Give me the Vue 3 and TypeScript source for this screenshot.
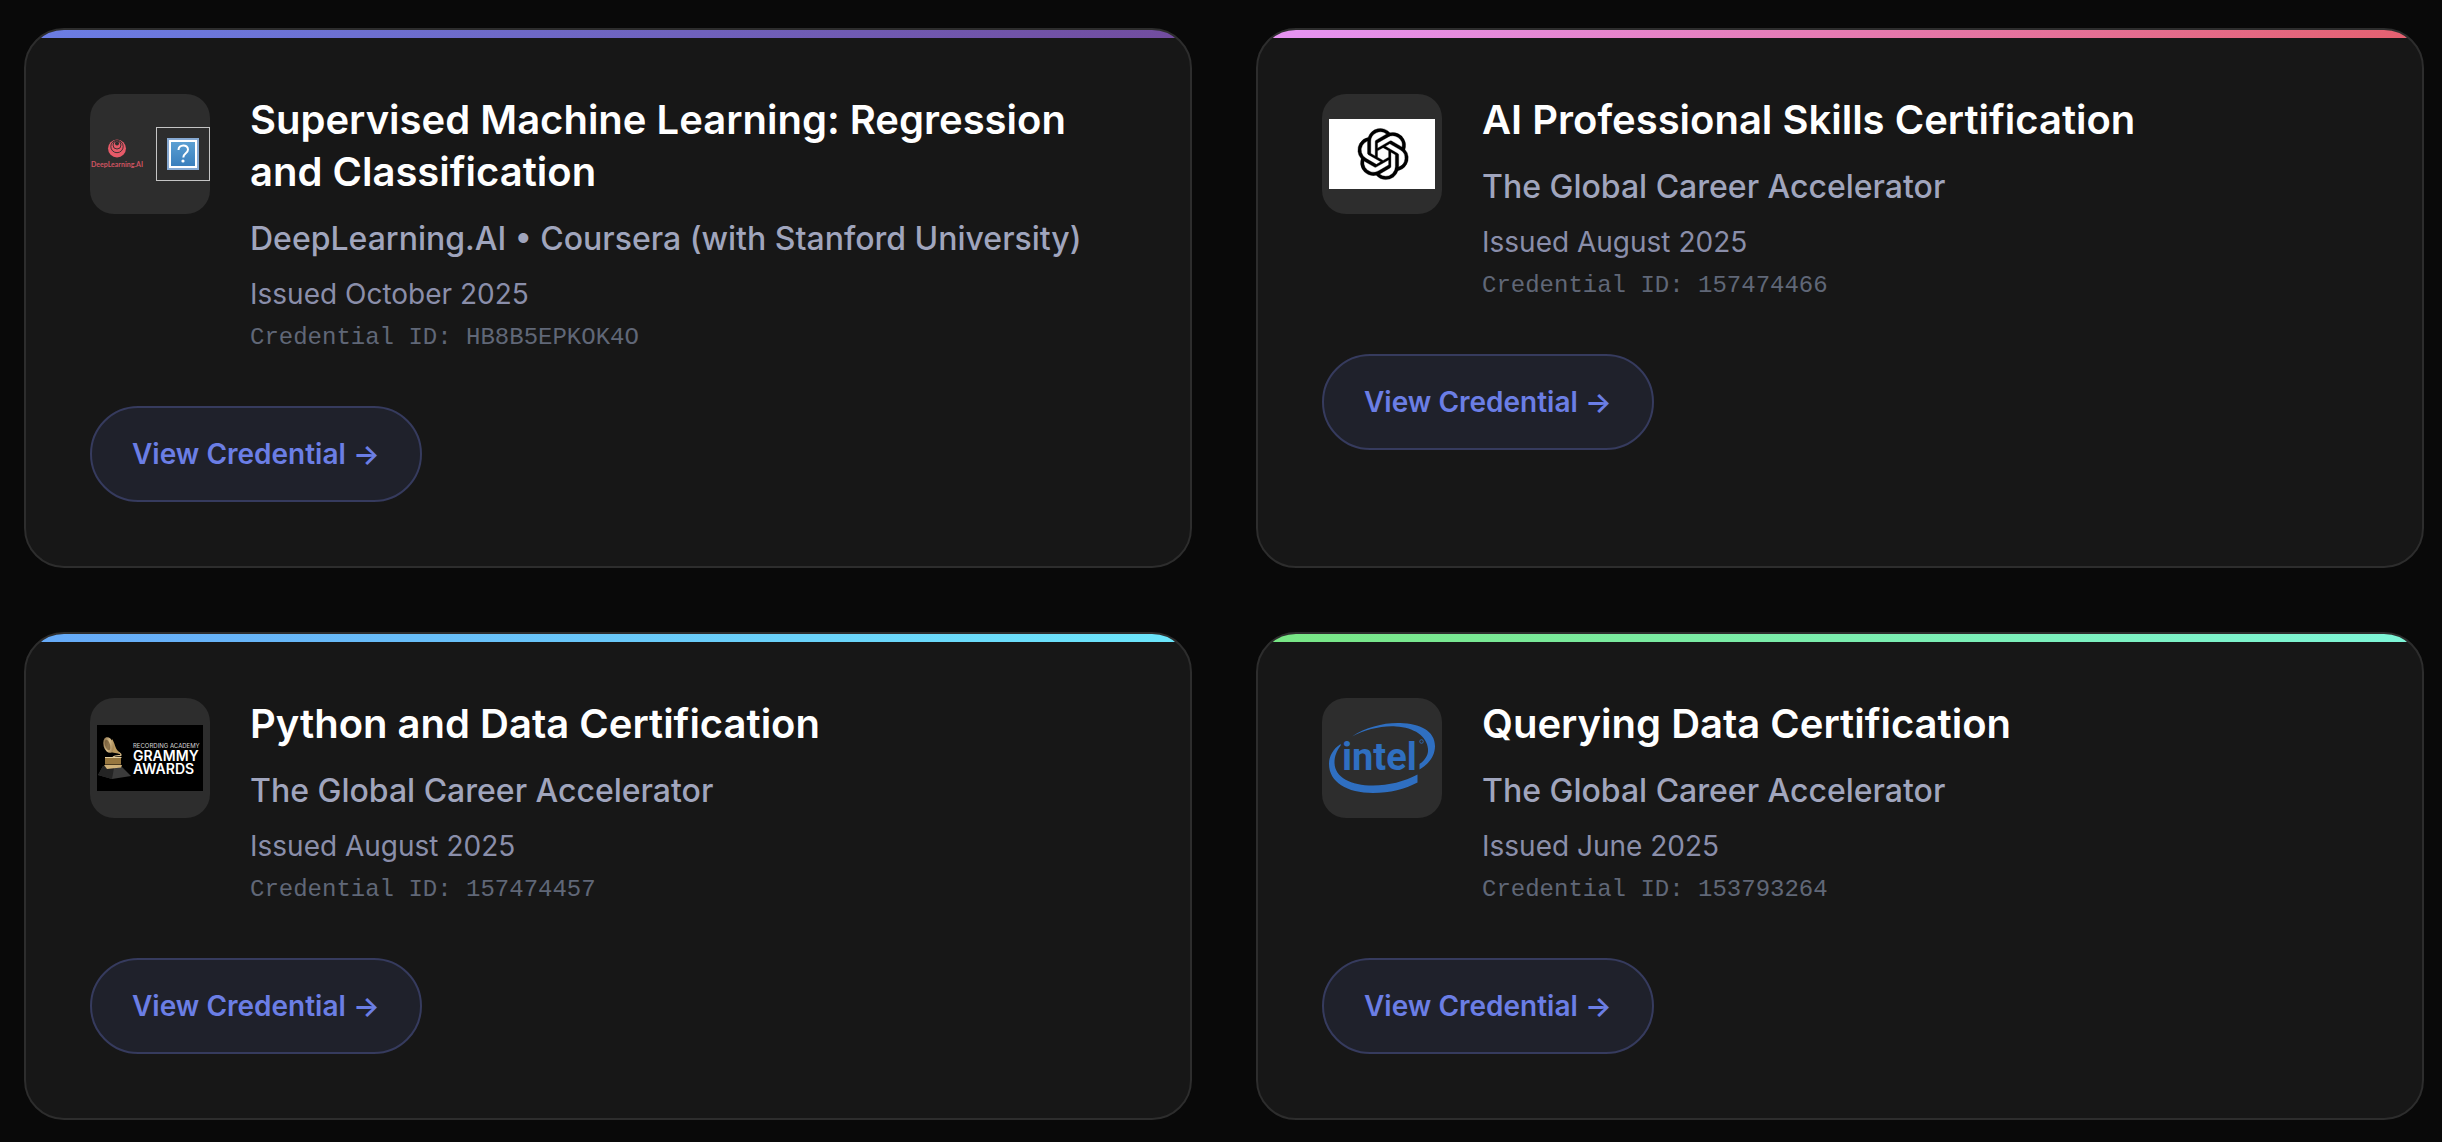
<script setup lang="ts">
interface Credential {
  title: string
  issuer: string
  issued: string
  id: string
  logo: 'deeplearning' | 'openai' | 'grammy' | 'intel'
  accent: 'violet' | 'pink' | 'sky' | 'mint'
}

const credentials: Credential[] = [
  {
    title: 'Supervised Machine Learning: Regression and Classification',
    issuer: 'DeepLearning.AI • Coursera (with Stanford University)',
    issued: 'October 2025',
    id: 'HB8B5EPKOK4O',
    logo: 'deeplearning',
    accent: 'violet',
  },
  {
    title: 'AI Professional Skills Certification',
    issuer: 'The Global Career Accelerator',
    issued: 'August 2025',
    id: '157474466',
    logo: 'openai',
    accent: 'pink',
  },
  {
    title: 'Python and Data Certification',
    issuer: 'The Global Career Accelerator',
    issued: 'August 2025',
    id: '157474457',
    logo: 'grammy',
    accent: 'sky',
  },
  {
    title: 'Querying Data Certification',
    issuer: 'The Global Career Accelerator',
    issued: 'June 2025',
    id: '153793264',
    logo: 'intel',
    accent: 'mint',
  },
]
</script>

<template>
  <main class="credentials">
    <article v-for="item in credentials" :key="item.id" class="card" :class="item.accent">
      <header class="head">
        <div class="tile">
          <svg v-if="item.logo === 'deeplearning'" viewBox="0 0 120 120" aria-hidden="true">
            <defs>
              <linearGradient id="missing-blue" x1="0" y1="0" x2="0" y2="1">
                <stop offset="0" stop-color="#5a9fd2" />
                <stop offset="1" stop-color="#3a7fbd" />
              </linearGradient>
            </defs>
            <circle cx="27" cy="54.500" r="9" fill="#e65a68" />
            <g fill="none" stroke="#2d2d2d" stroke-width=".9">
              <circle cx="27" cy="52.500" r="6.200" />
              <circle cx="27" cy="51" r="4" />
            </g>
            <circle cx="27" cy="49.500" r="2" fill="#2d2d2d" />
            <text x="1" y="73" class="mark-deep">DeepLearning.AI</text>
            <rect x="66.500" y="33.500" width="53" height="53" fill="none" stroke="#c4c4c4" />
            <rect x="77" y="44" width="32" height="32" fill="#86a9d2" />
            <rect x="79" y="46" width="28" height="28" fill="#fff" />
            <rect x="81" y="48" width="24" height="24" fill="url(#missing-blue)" />
            <path d="M88.500 56c0-6 9.500-6 9.500-.5 0 4-4.700 3.500-4.700 8" fill="none" stroke="#fff" stroke-width="2" />
            <circle cx="93" cy="67" r="1.600" fill="#fff" />
          </svg>

          <svg v-else-if="item.logo === 'openai'" viewBox="0 0 120 120" aria-hidden="true">
            <rect x="7" y="25" width="106" height="70" fill="#fff" />
            <g transform="translate(35.500 34.500) scale(2.130)">
              <path
                stroke="#000"
                stroke-width=".15"
                d="M22.2819 9.8211a5.9847 5.9847 0 0 0-.5157-4.9108 6.0462 6.0462 0 0 0-6.5098-2.9A6.0651 6.0651 0 0 0 4.9807 4.1818a5.9847 5.9847 0 0 0-3.9977 2.9 6.0462 6.0462 0 0 0 .7427 7.0966 5.98 5.98 0 0 0 .511 4.9107 6.051 6.051 0 0 0 6.5146 2.9001A5.9847 5.9847 0 0 0 13.2599 24a6.0557 6.0557 0 0 0 5.7718-4.2058 5.9894 5.9894 0 0 0 3.9977-2.9001 6.0557 6.0557 0 0 0-.7475-7.0729zm-9.022 12.6081a4.4755 4.4755 0 0 1-2.8764-1.0408l.1419-.0804 4.7783-2.7582a.7948.7948 0 0 0 .3927-.6813v-6.7369l2.02 1.1686a.071.071 0 0 1 .038.052v5.5826a4.504 4.504 0 0 1-4.4945 4.4944zm-9.6607-4.1254a4.4708 4.4708 0 0 1-.5346-3.0137l.142.0852 4.783 2.7582a.7712.7712 0 0 0 .7806 0l5.8428-3.3685v2.3324a.0804.0804 0 0 1-.0332.0615L9.74 19.9502a4.4992 4.4992 0 0 1-6.1408-1.6464zM2.3408 7.8956a4.485 4.485 0 0 1 2.3655-1.9728V11.6a.7664.7664 0 0 0 .3879.6765l5.8144 3.3543-2.0201 1.1685a.0757.0757 0 0 1-.071 0l-4.8303-2.7865A4.504 4.504 0 0 1 2.3408 7.872zm16.5963 3.8558L13.1038 8.364 15.1192 7.2a.0757.0757 0 0 1 .071 0l4.8303 2.7913a4.4944 4.4944 0 0 1-.6765 8.1042v-5.6772a.79.79 0 0 0-.407-.667zm2.0107-3.0231l-.142-.0852-4.7735-2.7818a.7759.7759 0 0 0-.7854 0L9.409 9.2297V6.8974a.0662.0662 0 0 1 .0284-.0615l4.8303-2.7866a4.4992 4.4992 0 0 1 6.6802 4.66zM8.3065 12.863l-2.02-1.1638a.0804.0804 0 0 1-.038-.0567V6.0742a4.4992 4.4992 0 0 1 7.3757-3.4537l-.142.0805L8.704 5.459a.7948.7948 0 0 0-.3927.6813zm1.0976-2.3654l2.602-1.4998 2.6069 1.4998v2.9994l-2.5974 1.4997-2.6067-1.4997Z"
              />
            </g>
          </svg>

          <svg v-else-if="item.logo === 'grammy'" viewBox="0 0 120 120" aria-hidden="true">
            <defs>
              <linearGradient id="gold" x1="0" y1="0" x2="1" y2="1">
                <stop offset="0" stop-color="#6e5636" />
                <stop offset="0.500" stop-color="#d8bd8a" />
                <stop offset="1" stop-color="#8a6b3c" />
              </linearGradient>
            </defs>
            <rect x="7" y="27" width="106" height="66" fill="#000" />
            <path d="M13 68h18l10 10-19 3-14-4z" fill="#3b3b3b" />
            <path d="M13 68l-5 9 14 4 2-11z" fill="#242424" />
            <path d="M15 59.500h16v7H15z" fill="#96763f" />
            <path d="M14 67h18l-1 2.500-14 1.500z" fill="#d0b27a" />
            <path d="M15 59.500h16.500" stroke="#e6cf9d" />
            <path d="M23 53c4 1 8 1.500 8 4 0 1.500-5-.5-8 2" fill="none" stroke="#d8bd8a" stroke-width="1.300" />
            <path d="M22 41c3 4 3 9 6 12l3 3c-4-1-8-1-11-2z" fill="#b8975c" />
            <ellipse cx="18.500" cy="47" rx="5" ry="8" transform="rotate(-16 18.500 47)" fill="url(#gold)" />
            <ellipse cx="17.500" cy="47" rx="2.500" ry="5.500" transform="rotate(-16 17.500 47)" fill="#5c4426" opacity=".6" />
            <text x="43" y="50" class="mark-academy">RECORDING ACADEMY</text>
            <text x="43" y="63" class="mark-grammy">GRAMMY</text>
            <text x="43" y="76" class="mark-grammy">AWARDS</text>
          </svg>

          <svg v-else viewBox="0 0 120 120" aria-hidden="true">
            <g fill="#2f6fc1">
              <path d="M30 38.500C44 29 62 24.500 78 25c20 .5 35 8 35 23 0 10-6 18-15.500 23.500V66c5.500-4 9-9 8.500-15C105 38 92 29.500 74 28.500c-15-1-31 3.500-44 10z" />
              <path d="M18.700 46C11 51 7 58 7 66c0 18 18 29 44 29 17 0 32-4 44.500-10.500V76.500C82 83.500 67 87.500 51 87.500c-22 0-38-8-38.500-22.500 0-7 2.200-12 6.200-17.500z" />
              <text x="20" y="72" class="mark-intel">intel</text>
            </g>
            <circle cx="99.500" cy="43.500" r="1.800" fill="none" stroke="#2f6fc1" stroke-width=".8" />
          </svg>
        </div>

        <div class="info">
          <h3 class="title">{{ item.title }}</h3>
          <p class="issuer">{{ item.issuer }}</p>
          <p class="issued">Issued {{ item.issued }}</p>
          <p class="id">Credential ID: {{ item.id }}</p>
        </div>
      </header>
      <a class="link" href="#">View Credential →</a>
    </article>
  </main>
</template>

<style>
body {
  margin: 0;
  background: #090909;
}
</style>

<style scoped>
.credentials {
  display: grid;
  grid-template-columns: repeat(2, minmax(0, 1fr));
  gap: 64px;
  padding: 28px 18px 22px 24px;
  font-family: Inter, 'Liberation Sans', sans-serif;
}

.card {
  display: flex;
  flex-direction: column;
  align-items: flex-start;
  gap: 48px;
  padding: 64px;
  border: 2px solid #2d2d2d;
  border-radius: 40px;
  background: linear-gradient(135deg, var(--from), var(--to)) no-repeat 0 0 / 100% 8px, #171717;
}

.violet { --from: #6b7ee5; --to: #724c9e; }
.pink { --from: #e695f5; --to: #e4606e; }
.sky { --from: #66a9f8; --to: #6ce7fb; }
.mint { --from: #78e684; --to: #7ef6d9; }

.head {
  display: flex;
  align-items: flex-start;
  gap: 40px;
}

.tile {
  flex: none;
  width: 120px;
  height: 120px;
  border-radius: 24px;
  background: #2d2d2d;
  overflow: hidden;
}

.tile svg {
  display: block;
  width: 100%;
  height: 100%;
}

.mark-deep { font: 700 7px Lato, sans-serif; fill: #cf5461; }
.mark-academy { font: 400 6px Inter, sans-serif; fill: #d6d6d6; }
.mark-grammy { font: 600 14px Inter, sans-serif; fill: #fff; }
.mark-intel { font: 700 38px Roboto, sans-serif; }

.title,
.issuer,
.issued,
.id {
  margin: 0;
}

.title {
  margin-bottom: 16px;
  font-size: 40px;
  font-weight: 600;
  line-height: 52px;
  color: #fff;
}

.issuer {
  margin-bottom: 6px;
  font-size: 32px;
  font-weight: 500;
  line-height: 50px;
  color: #a0a5bd;
}

.issued {
  font-size: 28px;
  line-height: 48px;
  color: #8a8eaa;
}

.id {
  font-family: 'Liberation Mono', 'Courier New', monospace;
  font-size: 24px;
  line-height: 40px;
  color: #606777;
}

.link {
  padding: 22px 40px;
  border: 2px solid #363b5e;
  border-radius: 48px;
  background: #1f212b;
  font-size: 28px;
  font-weight: 600;
  line-height: 48px;
  color: #6b7ee5;
  text-decoration: none;
}
</style>
